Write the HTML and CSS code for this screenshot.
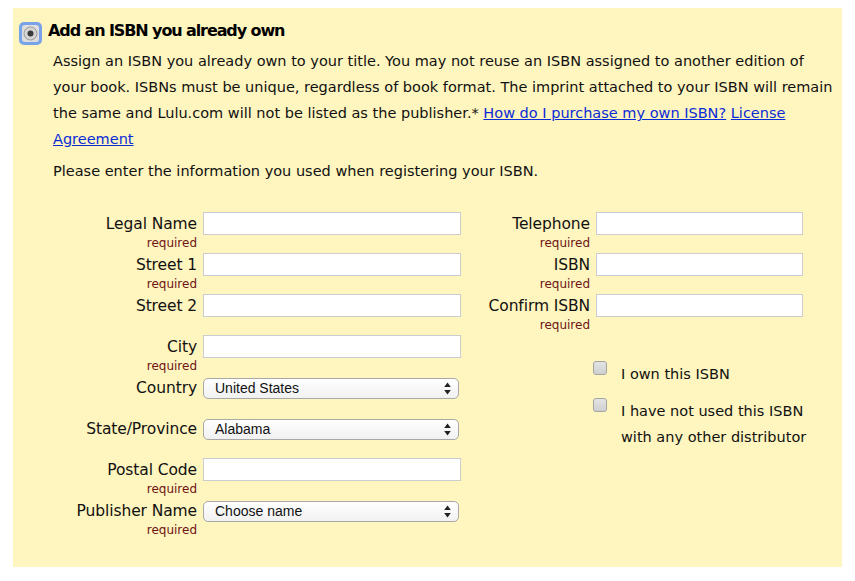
FILE: index.html
```html
<!DOCTYPE html>
<html lang="en">
<head>
<meta charset="utf-8">
<title>Add an ISBN you already own</title>
<link rel="stylesheet" href="styles.css">
</head>
<body>
<div class="panel">
  <div class="head">
    <span class="radio">
      <svg width="23" height="23" viewBox="0 0 23 23">
        <rect x="0" y="0" width="23" height="23" rx="5" fill="#79a3e8"/>
        <rect x="3" y="3" width="17" height="17" rx="3" fill="#dedede"/>
        <circle cx="11.5" cy="11.5" r="6.5" fill="#d4d4d4" stroke="#9c9c9c" stroke-width="1"/>
        <circle cx="11.5" cy="11.5" r="3" fill="#3a3a3a"/>
      </svg>
    </span>
    <h2 class="title">Add an ISBN you already own</h2>
  </div>
  <div class="body">
    <p class="intro">Assign an ISBN you already own to your title. You may not reuse an ISBN assigned to another edition of your book. ISBNs must be unique, regardless of book format. The imprint attached to your ISBN will remain the same and Lulu.com will not be listed as the publisher.* <a href="#">How do I purchase my own ISBN?</a> <a href="#">License Agreement</a></p>
    <p class="note">Please enter the information you used when registering your ISBN.</p>

    <div class="form">
      <div class="col col-left">
        <div class="row">
          <div class="lbl"><label>Legal Name</label><span class="req">required</span></div>
          <input class="text" type="text">
        </div>
        <div class="row">
          <div class="lbl"><label>Street 1</label><span class="req">required</span></div>
          <input class="text" type="text">
        </div>
        <div class="row">
          <div class="lbl"><label>Street 2</label></div>
          <input class="text" type="text">
        </div>
        <div class="row">
          <div class="lbl"><label>City</label><span class="req">required</span></div>
          <input class="text" type="text">
        </div>
        <div class="row">
          <div class="lbl"><label>Country</label></div>
          <span class="selwrap">
            <select class="sel"><option>United States</option></select>
            <svg class="arrows" width="7" height="13" viewBox="0 0 7 13"><path d="M3.5 0.5 L6.8 5 L0.2 5 Z M3.5 12.5 L6.8 8 L0.2 8 Z" fill="#222"/></svg>
          </span>
        </div>
        <div class="row">
          <div class="lbl"><label>State/Province</label></div>
          <span class="selwrap">
            <select class="sel"><option>Alabama</option></select>
            <svg class="arrows" width="7" height="13" viewBox="0 0 7 13"><path d="M3.5 0.5 L6.8 5 L0.2 5 Z M3.5 12.5 L6.8 8 L0.2 8 Z" fill="#222"/></svg>
          </span>
        </div>
        <div class="row">
          <div class="lbl"><label>Postal Code</label><span class="req">required</span></div>
          <input class="text" type="text">
        </div>
        <div class="row">
          <div class="lbl"><label>Publisher Name</label><span class="req">required</span></div>
          <span class="selwrap">
            <select class="sel"><option>Choose name</option></select>
            <svg class="arrows" width="7" height="13" viewBox="0 0 7 13"><path d="M3.5 0.5 L6.8 5 L0.2 5 Z M3.5 12.5 L6.8 8 L0.2 8 Z" fill="#222"/></svg>
          </span>
        </div>
      </div>

      <div class="col col-right">
        <div class="row">
          <div class="lbl"><label>Telephone</label><span class="req">required</span></div>
          <input class="text" type="text">
        </div>
        <div class="row">
          <div class="lbl"><label>ISBN</label><span class="req">required</span></div>
          <input class="text" type="text">
        </div>
        <div class="row">
          <div class="lbl"><label>Confirm ISBN</label><span class="req">required</span></div>
          <input class="text" type="text">
        </div>
        <div class="checks">
          <label class="check"><input class="box" type="checkbox"><span class="ctext">I own this ISBN</span></label>
          <label class="check"><input class="box" type="checkbox"><span class="ctext">I have not used this ISBN<br>with any other distributor</span></label>
        </div>
      </div>
    </div>
  </div>
</div>
</body>
</html>
```

FILE: styles.css
```css
html, body {
  margin: 0;
  padding: 0;
  background: #ffffff;
}

body {
  font-family: "DejaVu Sans", Verdana, sans-serif;
  color: #111111;
}

.panel {
  margin: 8px 13px 0 13px;
  width: 829px;
  height: 559px;
  background: #fff5bf;
  box-sizing: border-box;
  padding-top: 14px;
}

.head {
  display: flex;
  align-items: flex-start;
  gap: 6px;
  padding-left: 6px;
}

.radio {
  display: block;
  width: 23px;
  height: 23px;
}

.radio svg {
  display: block;
}

.title {
  margin: -1px 0 0 0;
  font-size: 16px;
  line-height: 20px;
  font-weight: bold;
  letter-spacing: -1.1px;
  color: #000;
}

.body {
  padding-left: 40px;
  padding-right: 7px;
}

.intro, .note {
  margin: 0;
  font-size: 14.5px;
  line-height: 26px;
  color: #111;
}

.intro {
  margin-top: 3px;
}

.note {
  margin-top: 6px;
}

a {
  color: #0a2bd6;
  text-decoration: underline;
}

.form {
  display: flex;
  gap: 19px;
  margin-top: 28px;
}

.row {
  display: grid;
  align-items: start;
  column-gap: 6px;
  height: 41px;
}

.col-left .row {
  grid-template-columns: 144px 258px;
}

.col-right .row {
  grid-template-columns: 110px 207px;
}

.lbl {
  text-align: right;
}

.lbl label {
  display: block;
  font-size: 15.5px;
  line-height: 24px;
  letter-spacing: -0.1px;
  color: #111;
  white-space: nowrap;
}

.req {
  display: block;
  font-size: 12px;
  line-height: 14px;
  color: #6e1414;
}

.text {
  display: block;
  box-sizing: border-box;
  width: 100%;
  height: 23px;
  margin: 0;
  border: 1px solid #cbcbd2;
  background: #ffffff;
  border-radius: 0;
  padding: 0 4px;
}

.selwrap {
  position: relative;
  display: block;
  width: 256px;
  margin-top: 2px;
}

.sel {
  -webkit-appearance: none;
  appearance: none;
  display: block;
  box-sizing: border-box;
  width: 256px;
  height: 21px;
  margin: 0;
  padding: 0 0 0 11px;
  border: 1px solid #a8a8a8;
  border-radius: 5px;
  background: linear-gradient(#ffffff, #f1f1f1);
  font-family: "Liberation Sans", Arial, sans-serif;
  font-size: 14px;
  line-height: 19px;
  color: #111;
}

.arrows {
  position: absolute;
  right: 8px;
  top: 4px;
}

.checks {
  display: flex;
  flex-direction: column;
  gap: 11px;
  margin-top: 26px;
  padding-left: 113px;
}

.check {
  display: flex;
  align-items: flex-start;
  gap: 14px;
}

.box {
  -webkit-appearance: none;
  appearance: none;
  display: block;
  width: 14px;
  height: 14px;
  margin: 0;
  flex: none;
  box-sizing: border-box;
  border: 1px solid #a4a4a4;
  border-radius: 3px;
  background: linear-gradient(#e4e4e4, #cfcfcf);
}

.ctext {
  font-size: 14.5px;
  line-height: 26px;
  color: #111;
}
```
